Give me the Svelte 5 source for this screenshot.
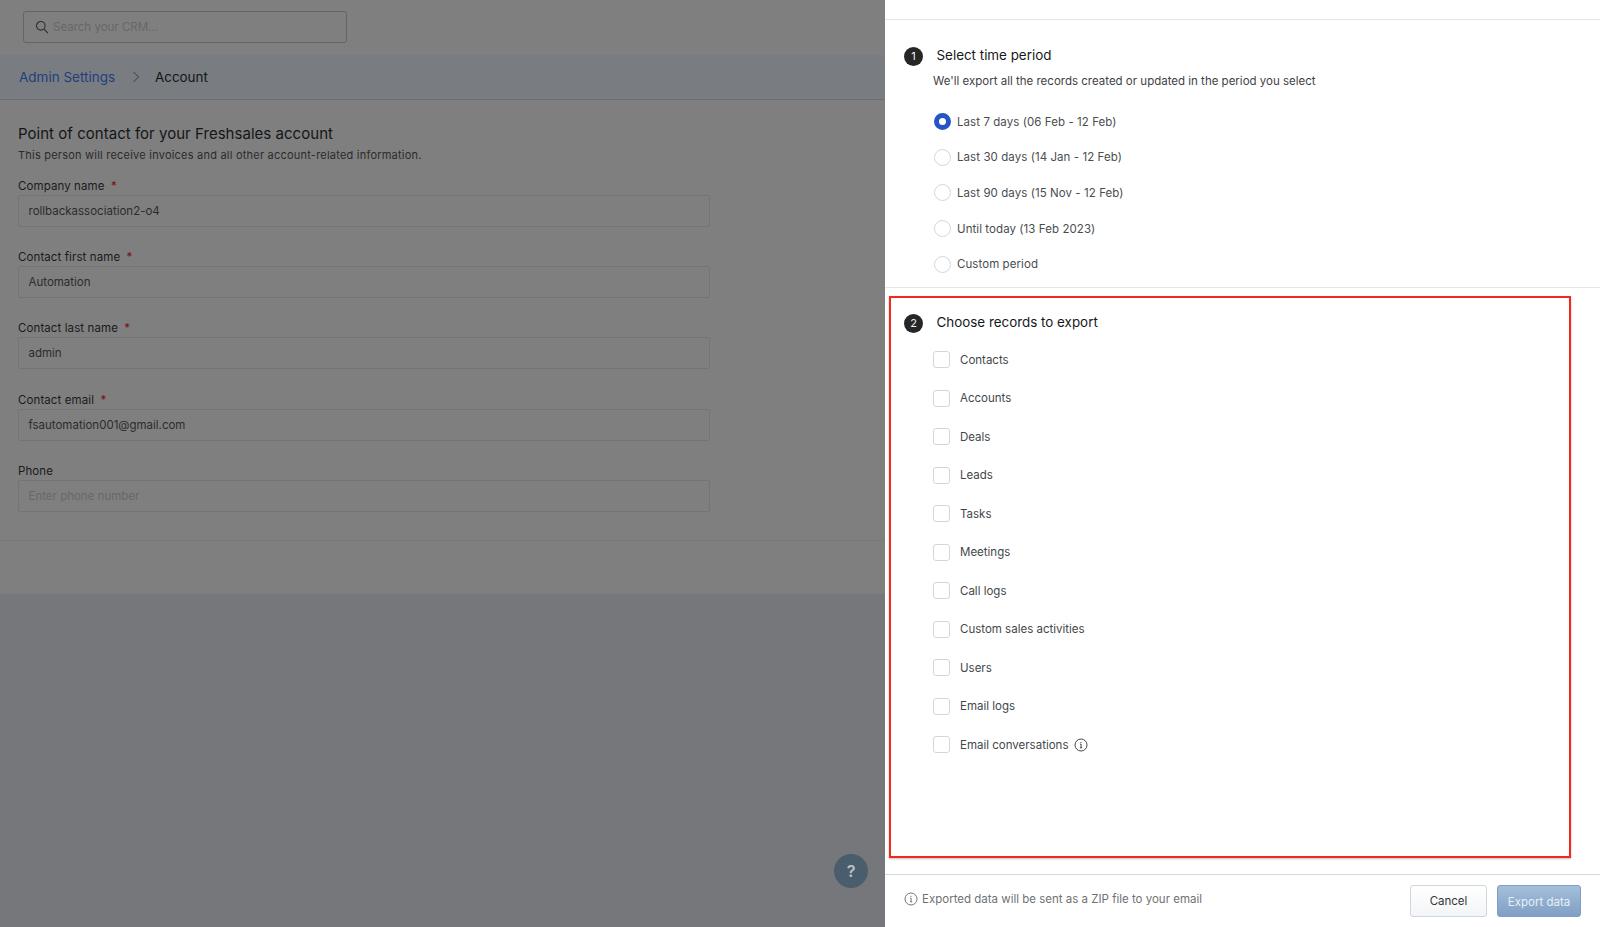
<script>
	const fields = [
		{ label: 'Company name', value: 'rollbackassociation2-o4', required: true },
		{ label: 'Contact first name', value: 'Automation', required: true },
		{ label: 'Contact last name', value: 'admin', required: true },
		{ label: 'Contact email', value: 'fsautomation001@gmail.com', required: true },
		{ label: 'Phone', placeholder: 'Enter phone number', required: false }
	];

	const periods = [
		'Last 7 days (06 Feb - 12 Feb)',
		'Last 30 days (14 Jan - 12 Feb)',
		'Last 90 days (15 Nov - 12 Feb)',
		'Until today (13 Feb 2023)',
		'Custom period'
	];

	const records = [
		'Contacts',
		'Accounts',
		'Deals',
		'Leads',
		'Tasks',
		'Meetings',
		'Call logs',
		'Custom sales activities',
		'Users',
		'Email logs',
		'Email conversations'
	];
</script>

<div class="page">
	<div class="backdrop">
		<div class="topbar">
			<div class="search">
				<svg width="14" height="14" viewBox="0 0 14 14" fill="none" stroke="#2f2f2f" stroke-width="1.1">
					<circle cx="5.8" cy="5.8" r="4.3" />
					<path d="M8.9 8.9l4 4.2" />
				</svg>
				<span>Search your CRM...</span>
			</div>
		</div>
		<div class="crumbs">
			<span class="crumb-link">Admin Settings</span>
			<svg width="8" height="12" viewBox="0 0 8 12" fill="none" stroke="#3a3d40" stroke-width="1">
				<path d="M1.5 1l5 5-5 5" />
			</svg>
			<span class="crumb-current">Account</span>
		</div>
		<div class="content">
			<div class="form">
				<h1>Point of contact for your Freshsales account</h1>
				<p>This person will receive invoices and all other account-related information.</p>
				{#each fields as field}
					<div class="field">
						<div class="field-label">
							{field.label}
							{#if field.required}<span class="req">*</span>{/if}
						</div>
						<div class="input" class:placeholder={!field.value}>{field.value || field.placeholder}</div>
					</div>
				{/each}
			</div>
			<div class="form-footer"></div>
		</div>
		<div class="help">?</div>
	</div>

	<div class="drawer">
		<div class="drawer-head"></div>
		<section class="period">
			<div class="step">
				<span class="num">1</span>
				<h2>Select time period</h2>
			</div>
			<div class="hint">We'll export all the records created or updated in the period you select</div>
			<div class="radios">
				{#each periods as period, i}
					<div class="radio-row">
						<span class="radio" class:on={i === 0}></span>
						<span>{period}</span>
					</div>
				{/each}
			</div>
		</section>
		<div class="records-wrap">
			<section class="records">
				<div class="step">
					<span class="num">2</span>
					<h2>Choose records to export</h2>
				</div>
				<div class="checks">
					{#each records as record}
						<div class="check-row">
							<span class="box"></span>
							<span>{record}</span>
							{#if record === 'Email conversations'}
								<svg class="info" width="14" height="14" viewBox="0 0 14 14" fill="none" stroke="#333" stroke-width="0.9">
									<circle cx="7" cy="7" r="6" />
									<path d="M6 6.2h1.1v3.6M5.9 9.8h2.3M7 3.9v1.1" />
								</svg>
							{/if}
						</div>
					{/each}
				</div>
			</section>
		</div>
		<div class="drawer-foot">
			<div class="note">
				<svg width="14" height="14" viewBox="0 0 14 14" fill="none" stroke="#666" stroke-width="0.9">
					<circle cx="7" cy="7" r="6" />
					<path d="M6 6.2h1.1v3.6M5.9 9.8h2.3M7 3.9v1.1" />
				</svg>
				<span>Exported data will be sent as a ZIP file to your email</span>
			</div>
			<div class="actions">
				<button class="btn cancel">Cancel</button>
				<button class="btn export">Export data</button>
			</div>
		</div>
	</div>
</div>

<style>
	:global(body) {
		margin: 0;
		font-family: Inter, "Liberation Sans", sans-serif;
	}

	.page {
		display: flex;
		height: 927px;
		overflow: hidden;
	}

	.backdrop {
		position: relative;
		width: 885px;
		background: #76777a;
		display: flex;
		flex-direction: column;
	}

	.topbar {
		height: 55px;
		box-sizing: border-box;
		padding: 11px 0 0 23px;
		background: #7f7f7f;
	}

	.search {
		box-sizing: border-box;
		width: 324px;
		height: 32px;
		border: 1px solid #636465;
		border-radius: 3px;
		display: flex;
		align-items: center;
		gap: 4px;
		padding-left: 11px;
		color: #676767;
		font-size: 11.5px;
	}

	.crumbs {
		height: 45px;
		box-sizing: border-box;
		padding-left: 19px;
		display: flex;
		align-items: center;
		background: #797d82;
		border-bottom: 1px solid #6c6e72;
		font-size: 13.4px;
	}

	.crumb-link {
		color: #1f3f7c;
		width: 113px;
		font-size: 13.5px;
	}

	.crumb-current {
		color: #141414;
		margin-left: 15px;
	}

	.content {
		height: 494px;
		background: #7f7f7f;
		display: flex;
		flex-direction: column;
	}

	.form {
		height: 441px;
		box-sizing: border-box;
		padding: 25px 175px 0 18px;
		border-bottom: 1px solid #797979;
	}

	h1 {
		margin: 0;
		font-size: 15px;
		line-height: 18px;
		font-weight: 400;
		letter-spacing: 0.03px;
		color: #141618;
	}

	.form p {
		margin: 5px 0 0;
		font-size: 11px;
		line-height: 15px;
		color: #2b2b2b;
		letter-spacing: 0.22px;
	}

	.field {
		margin-bottom: 23.4px;
	}

	.form p + .field {
		margin-top: 15.5px;
	}

	.field-label {
		font-size: 11.5px;
		line-height: 15px;
		letter-spacing: 0.1px;
		color: #1b1b1b;
		margin-bottom: 1px;
	}

	.req {
		color: #7d0f12;
		margin-left: 3px;
	}

	.input {
		box-sizing: border-box;
		height: 32px;
		border: 1px solid #747474;
		border-radius: 2px;
		padding-left: 9.5px;
		display: flex;
		align-items: center;
		font-size: 11.5px;
		color: #2c2c2c;
	}

	.input.placeholder {
		color: #686868;
	}

	.help {
		position: absolute;
		left: 834px;
		top: 854px;
		width: 34px;
		height: 34px;
		border-radius: 50%;
		background: #4a5d6d;
		color: #b9c0c6;
		display: flex;
		align-items: center;
		justify-content: center;
		font-size: 16px;
		font-weight: 600;
	}

	.drawer {
		width: 715px;
		background: #fff;
		display: flex;
		flex-direction: column;
	}

	.drawer-head {
		height: 19px;
		border-bottom: 1px solid #e3e6ea;
	}

	.period {
		height: 268px;
		box-sizing: border-box;
		padding: 26px 0 0 19px;
		border-bottom: 1px solid #e3e6ea;
	}

	.step {
		display: flex;
		align-items: center;
		height: 20px;
	}

	.num {
		width: 19px;
		height: 19px;
		border-radius: 50%;
		background: #262626;
		color: #f2f2f2;
		font-size: 11px;
		display: flex;
		align-items: center;
		justify-content: center;
	}

	h2 {
		margin: 0 0 1.5px 13.5px;
		font-size: 13.4px;
		font-weight: 400;
		color: #17191b;
	}

	.hint {
		margin: 8px 0 0 29px;
		font-size: 11.5px;
		line-height: 15px;
		color: #3f4245;
	}

	.radios {
		margin: 15px 0 0 30px;
	}

	.radio-row {
		height: 35.6px;
		display: flex;
		align-items: center;
		gap: 6px;
		font-size: 11.5px;
		letter-spacing: 0.07px;
		color: #4a4d50;
	}

	.radio {
		box-sizing: border-box;
		width: 17px;
		height: 17px;
		border-radius: 50%;
		border: 1px solid #cfd7df;
		background: #fff;
	}

	.radio.on {
		border: 5.5px solid #2356c4;
	}

	.records-wrap {
		padding: 8px 0 0 4px;
	}

	.records {
		box-sizing: border-box;
		width: 682px;
		height: 562px;
		border: 2px solid #f5291b;
		box-shadow: 0 1px 2px rgba(0, 0, 0, 0.25);
		padding: 15px 0 0 13px;
	}

	.checks {
		margin: 7.5px 0 0 29px;
	}

	.check-row {
		height: 38.5px;
		display: flex;
		align-items: center;
		font-size: 11.5px;
		color: #44474a;
	}

	.box {
		box-sizing: border-box;
		width: 17px;
		height: 17px;
		border: 1px solid #cfd7df;
		border-radius: 3px;
		margin-right: 10px;
	}

	.info {
		margin-left: 6px;
	}

	.drawer-foot {
		margin-top: 16px;
		flex: 1;
		border-top: 1px solid #cfd9e4;
		display: flex;
		justify-content: space-between;
		padding: 10px 19px 0 19px;
	}

	.note {
		display: flex;
		align-items: center;
		gap: 4px;
		height: 28px;
		font-size: 11.5px;
		color: #6f7276;
	}

	.actions {
		display: flex;
		gap: 10px;
	}

	.btn {
		box-sizing: border-box;
		height: 32px;
		border-radius: 3px;
		font-family: inherit;
		font-size: 11.5px;
	}

	.cancel {
		width: 77px;
		border: 1px solid #ced6df;
		background: linear-gradient(#fff, #f3f5f7);
		color: #33363a;
	}

	.export {
		width: 84px;
		padding-top: 2px;
		border: 1px solid #7e9fc4;
		background: linear-gradient(#a3bfdb, #7f9fc4);
		color: #e8eef5;
	}
</style>
